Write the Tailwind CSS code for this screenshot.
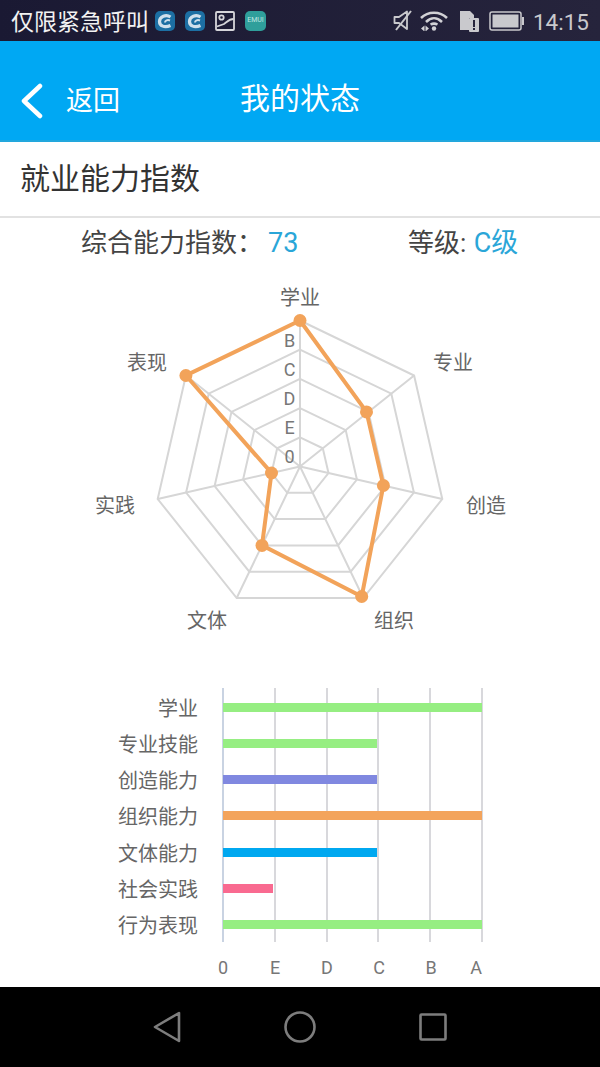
<!doctype html>
<html lang="zh">
<head>
<meta charset="utf-8">
<script src="https://cdn.jsdelivr.net/npm/@tailwindcss/browser@4"></script>
</head>
<body class="bg-white">
<div class="w-[600px] h-[1067px] flex flex-col overflow-hidden font-['Roboto','Noto_Sans_CJK_SC',sans-serif]">

  <!-- status bar -->
  <div class="h-[41px] shrink-0 flex items-center bg-linear-to-r from-[#1a1933] to-[#26243c] pl-[11px] pr-[11px]">
    <span class="text-[23px] w-[144px] pt-[3px] text-[#f2f2f2] leading-none">仅限紧急呼叫</span>
    <div class="flex items-center gap-[10px]">
      <svg class="w-[20px] h-[20px]" viewBox="0 0 20 20" fill="none" stroke="#cfe0ec"><rect width="20" height="20" rx="5" fill="#1c6fa3" stroke="none"/><path d="M15.500 6C11 3 4.500 5.500 4.500 10.500C4.500 15 9.500 17 15.500 14.500" stroke-width="3.200"/><path d="M15 9.500C12.500 8.500 10 9.500 10 11.500" stroke-width="2"/></svg>
      <svg class="w-[20px] h-[20px]" viewBox="0 0 20 20" fill="none" stroke="#cfe0ec"><rect width="20" height="20" rx="5" fill="#1c6fa3" stroke="none"/><path d="M15.500 6C11 3 4.500 5.500 4.500 10.500C4.500 15 9.500 17 15.500 14.500" stroke-width="3.200"/><path d="M15 9.500C12.500 8.500 10 9.500 10 11.500" stroke-width="2"/></svg>
      <svg class="w-[20px] h-[20px]" viewBox="0 0 20 20" fill="none" stroke="#d6d6da" stroke-width="1.800"><rect x="1" y="1" width="18" height="18" rx="1"/><circle cx="6.500" cy="6.500" r="2.200"/><path d="M2 15.500L9 13C12 11 14 8 18.500 8"/></svg>
      <div class="w-[21px] h-[20px] rounded-[5px] bg-[#2f9f9b] flex items-center justify-center text-[7px] text-[#bfe6e2]">EMUI</div>
    </div>
    <div class="ml-auto flex items-center">
      <svg class="w-[21px] h-[21px]" viewBox="0 0 21 21" fill="none" stroke="#c9c9cd" stroke-width="1.800" stroke-linejoin="round"><path d="M1.500 7H6L14 1.500V19L6 13H1.500Z"/><path d="M18 1L3 20" stroke-width="2"/></svg>
      <svg class="w-[28px] h-[21px] ml-[6px]" viewBox="0 0 28 21" fill="none" stroke="#d2d2d6" stroke-width="2.500"><path d="M1 8C8 1 20 1 27 8"/><path d="M6 12C11 7 17 7 22 12"/><path d="M10.500 14.500C12.500 13.500 15.500 13.500 17.500 14.500"/><circle cx="14" cy="18.500" r="2.200" fill="#d2d2d6" stroke="none"/><path d="M1 18.500L4.500 15.500V21.500ZM5.500 15.500L9 18.500L5.500 21.500Z" fill="#d2d2d6" stroke="none"/></svg>
      <svg class="w-[20px] h-[22px] ml-[11px]" viewBox="0 0 20 22"><path d="M1 1H11L15 5V8H10V20H1Z" fill="#c9c9cd"/><rect x="10" y="8" width="10" height="14" rx="1" fill="#c9c9cd"/><rect x="14" y="10" width="2" height="7" fill="#26243c"/><rect x="14" y="18" width="2" height="2" fill="#26243c"/></svg>
      <svg class="w-[35px] h-[20px] ml-[10px]" viewBox="0 0 35 20"><rect x="1" y="1" width="31" height="18" rx="2" fill="none" stroke="#c9c9cd" stroke-width="1.500"/><rect x="3.500" y="3.500" width="26" height="13" fill="#c9c9cd"/><rect x="33" y="6" width="2" height="8" fill="#c9c9cd"/></svg>
      <span class="text-[22.500px] pt-[3px] text-[#c9c9cd] leading-none ml-[9px]">14:15</span>
    </div>
  </div>

  <!-- header -->
  <div class="h-[101px] shrink-0 relative flex items-center justify-center bg-[#00a8f3] border-b-2 border-[#22a7dd]">
    <div class="absolute left-[21px] top-[42px] flex items-center">
      <svg class="w-[22px] h-[36px]" viewBox="0 0 22 36" fill="none" stroke="#fff" stroke-width="4.500" stroke-linecap="round" stroke-linejoin="round"><path d="M19 3L3 18L19 33"/></svg>
      <span class="text-[27px] text-white leading-none ml-[23px]">返回</span>
    </div>
    <span class="text-[30px] text-white leading-none mt-[16px]">我的状态</span>
  </div>

  <!-- section title -->
  <div class="h-[76px] shrink-0 flex items-center pl-[20px] border-b-2 border-[#e2e2e2]">
    <span class="text-[30px] text-[#333] leading-none">就业能力指数</span>
  </div>

  <!-- summary -->
  <div class="h-[50px] shrink-0 flex items-center text-[26px] text-[#444] leading-none">
    <div class="ml-[81px] w-[327px]">综合能力指数：<span class="text-[27px] text-[#2aa6d8] ml-[5px]">73</span></div>
    <div>等级: <span class="text-[27px] text-[#2aa6d8] ml-[1px]">C级</span></div>
  </div>

  <!-- radar -->
  <svg class="shrink-0 w-[600px] h-[400px]" viewBox="0 0 600 400">
    <g transform="translate(300 198.500)" fill="none" stroke="#d6d6d6" stroke-width="2">
      <polygon points="0,-146 114.100,-91 142.300,32.500 63.300,131.500 -63.300,131.500 -142.300,32.500 -114.100,-91"/>
      <polygon points="0,-116.800 91.300,-72.800 113.900,26 50.700,105.200 -50.700,105.200 -113.900,26 -91.300,-72.800"/>
      <polygon points="0,-87.600 68.500,-54.600 85.400,19.500 38,78.900 -38,78.900 -85.400,19.500 -68.500,-54.600"/>
      <polygon points="0,-58.400 45.700,-36.400 56.900,13 25.300,52.600 -25.300,52.600 -56.900,13 -45.700,-36.400"/>
      <polygon points="0,-29.200 22.800,-18.200 28.500,6.500 12.700,26.300 -12.700,26.300 -28.500,6.500 -22.800,-18.200"/>
      <path d="M0 0L0 -146M0 0L114.100 -91M0 0L142.300 32.500M0 0L63.300 131.500M0 0L-63.300 131.500M0 0L-142.300 32.500M0 0L-114.100 -91"/>
    </g>
    <g transform="translate(300 198.500)" fill="#f2a35a" stroke="#f2a35a">
      <polygon fill="none" stroke-width="4" points="0,-146 66.500,-54.600 83.400,19 61.700,130 -38,78.900 -28.500,6.500 -114.100,-91"/>
      <g stroke="none">
        <circle cx="0" cy="-146" r="6.500"/><circle cx="66.500" cy="-54.600" r="6.500"/><circle cx="83.400" cy="19" r="6.500"/><circle cx="61.700" cy="130" r="6.500"/><circle cx="-38" cy="78.900" r="6.500"/><circle cx="-28.500" cy="6.500" r="6.500"/><circle cx="-114.100" cy="-91" r="6.500"/>
      </g>
    </g>
    <g font-size="20" fill="#666" text-anchor="middle">
      <text x="300" y="37">学业</text>
      <text x="453" y="102">专业</text>
      <text x="486" y="245">创造</text>
      <text x="394" y="360">组织</text>
      <text x="207" y="360">文体</text>
      <text x="115" y="245">实践</text>
      <text x="147" y="102">表现</text>
    </g>
    <g font-size="18" fill="#777" text-anchor="middle">
      <text x="289.500" y="79">B</text>
      <text x="289.500" y="108">C</text>
      <text x="289.500" y="137">D</text>
      <text x="289.500" y="166">E</text>
      <text x="289.500" y="195">0</text>
    </g>
  </svg>

  <!-- bar chart -->
  <div class="shrink-0 h-[320px] -mt-[1px] pt-[22.600px] relative">
    <div class="absolute left-[222px] top-[21px] w-[261px] h-[254px] flex justify-between">
      <div class="w-[2px] bg-[#c9d3e2]"></div>
      <div class="w-[2px] bg-[#d8d8dc]"></div>
      <div class="w-[2px] bg-[#d8d8dc]"></div>
      <div class="w-[2px] bg-[#d8d8dc]"></div>
      <div class="w-[2px] bg-[#d8d8dc]"></div>
      <div class="w-[2px] bg-[#d8d8dc]"></div>
    </div>
    <div class="relative flex flex-col text-[20px] text-[#666] leading-none">
      <div class="h-[36.100px] flex items-center"><span class="w-[198px] pt-[3px] text-right">学业</span><div class="ml-[25px] w-[259px] h-[9px] bg-[#96ee82]"></div></div>
      <div class="h-[36.100px] flex items-center"><span class="w-[198px] pt-[3px] text-right">专业技能</span><div class="ml-[25px] w-[154px] h-[9px] bg-[#96ee82]"></div></div>
      <div class="h-[36.100px] flex items-center"><span class="w-[198px] pt-[3px] text-right">创造能力</span><div class="ml-[25px] w-[154px] h-[9px] bg-[#8088e0]"></div></div>
      <div class="h-[36.100px] flex items-center"><span class="w-[198px] pt-[3px] text-right">组织能力</span><div class="ml-[25px] w-[259px] h-[9px] bg-[#f3a45c]"></div></div>
      <div class="h-[36.100px] flex items-center"><span class="w-[198px] pt-[3px] text-right">文体能力</span><div class="ml-[25px] w-[154px] h-[9px] bg-[#00a8f0]"></div></div>
      <div class="h-[36.100px] flex items-center"><span class="w-[198px] pt-[3px] text-right">社会实践</span><div class="ml-[25px] w-[50px] h-[9px] bg-[#f96a90]"></div></div>
      <div class="h-[36.100px] flex items-center"><span class="w-[198px] pt-[3px] text-right">行为表现</span><div class="ml-[25px] w-[259px] h-[9px] bg-[#96ee82]"></div></div>
    </div>
    <div class="flex pl-[197px] mt-[17px] text-[18px] text-[#777] leading-none text-center">
      <span class="w-[52px]">0</span><span class="w-[52px]">E</span><span class="w-[52px]">D</span><span class="w-[52px]">C</span><span class="w-[52px]">B</span><span class="w-[38px]">A</span>
    </div>
  </div>

  <!-- nav bar -->
  <div class="flex-1 bg-black flex items-center justify-center gap-[103px]">
    <svg class="w-[28px] h-[32px]" viewBox="0 0 28 32" fill="none" stroke="#7d7d7d" stroke-width="2.600" stroke-linejoin="round"><path d="M26 2V30L2 16Z"/></svg>
    <svg class="w-[32px] h-[32px]" viewBox="0 0 32 32" fill="none" stroke="#7d7d7d" stroke-width="2.600"><circle cx="16" cy="16" r="14.500"/></svg>
    <svg class="w-[28px] h-[28px]" viewBox="0 0 28 28" fill="none" stroke="#7d7d7d" stroke-width="2.600" stroke-linejoin="round"><rect x="1.500" y="1.500" width="25" height="25" rx="1"/></svg>
  </div>
</div>
</body>
</html>
